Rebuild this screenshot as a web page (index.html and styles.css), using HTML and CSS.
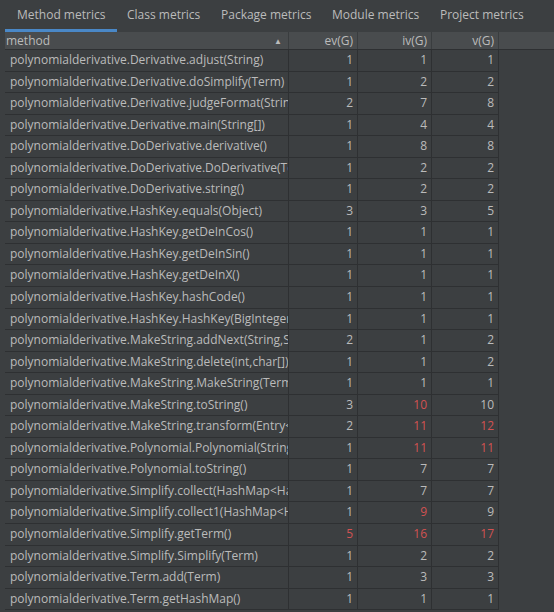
FILE: index.html
```html
<!DOCTYPE html>
<html>
<head>
<meta charset="utf-8">
<link rel="stylesheet" href="styles.css">
</head>
<body>
<div class="tabs">
  <div class="tab active">Method metrics</div>
  <div class="tab">Class metrics</div>
  <div class="tab">Package metrics</div>
  <div class="tab">Module metrics</div>
  <div class="tab">Project metrics</div>
</div>
<div class="table">
  <div class="row head">
    <div class="c m">method<span class="arrow">&#9650;</span></div>
    <div class="c n">ev(G)</div>
    <div class="c n">iv(G)</div>
    <div class="c n">v(G)</div>
  </div>
  <div class="row"><div class="c m">polynomialderivative.Derivative.adjust(String)</div><div class="c n">1</div><div class="c n">1</div><div class="c n">1</div></div>
  <div class="row"><div class="c m">polynomialderivative.Derivative.doSimplify(Term)</div><div class="c n">1</div><div class="c n">2</div><div class="c n">2</div></div>
  <div class="row"><div class="c m">polynomialderivative.Derivative.judgeFormat(Strin</div><div class="c n">2</div><div class="c n">7</div><div class="c n">8</div></div>
  <div class="row"><div class="c m">polynomialderivative.Derivative.main(String[])</div><div class="c n">1</div><div class="c n">4</div><div class="c n">4</div></div>
  <div class="row"><div class="c m">polynomialderivative.DoDerivative.derivative()</div><div class="c n">1</div><div class="c n">8</div><div class="c n">8</div></div>
  <div class="row"><div class="c m">polynomialderivative.DoDerivative.DoDerivative(Te</div><div class="c n">1</div><div class="c n">2</div><div class="c n">2</div></div>
  <div class="row"><div class="c m">polynomialderivative.DoDerivative.string()</div><div class="c n">1</div><div class="c n">2</div><div class="c n">2</div></div>
  <div class="row"><div class="c m">polynomialderivative.HashKey.equals(Object)</div><div class="c n">3</div><div class="c n">3</div><div class="c n">5</div></div>
  <div class="row"><div class="c m">polynomialderivative.HashKey.getDeInCos()</div><div class="c n">1</div><div class="c n">1</div><div class="c n">1</div></div>
  <div class="row"><div class="c m">polynomialderivative.HashKey.getDeInSin()</div><div class="c n">1</div><div class="c n">1</div><div class="c n">1</div></div>
  <div class="row"><div class="c m">polynomialderivative.HashKey.getDeInX()</div><div class="c n">1</div><div class="c n">1</div><div class="c n">1</div></div>
  <div class="row"><div class="c m">polynomialderivative.HashKey.hashCode()</div><div class="c n">1</div><div class="c n">1</div><div class="c n">1</div></div>
  <div class="row"><div class="c m">polynomialderivative.HashKey.HashKey(BigInteger</div><div class="c n">1</div><div class="c n">1</div><div class="c n">1</div></div>
  <div class="row"><div class="c m">polynomialderivative.MakeString.addNext(String,S</div><div class="c n">2</div><div class="c n">1</div><div class="c n">2</div></div>
  <div class="row"><div class="c m">polynomialderivative.MakeString.delete(int,char[])</div><div class="c n">1</div><div class="c n">1</div><div class="c n">2</div></div>
  <div class="row"><div class="c m">polynomialderivative.MakeString.MakeString(Term</div><div class="c n">1</div><div class="c n">1</div><div class="c n">1</div></div>
  <div class="row"><div class="c m">polynomialderivative.MakeString.toString()</div><div class="c n">3</div><div class="c n red">10</div><div class="c n">10</div></div>
  <div class="row"><div class="c m">polynomialderivative.MakeString.transform(Entry&lt;</div><div class="c n">2</div><div class="c n red">11</div><div class="c n red">12</div></div>
  <div class="row"><div class="c m">polynomialderivative.Polynomial.Polynomial(String</div><div class="c n">1</div><div class="c n red">11</div><div class="c n red">11</div></div>
  <div class="row"><div class="c m">polynomialderivative.Polynomial.toString()</div><div class="c n">1</div><div class="c n">7</div><div class="c n">7</div></div>
  <div class="row"><div class="c m">polynomialderivative.Simplify.collect(HashMap&lt;Ha</div><div class="c n">1</div><div class="c n">7</div><div class="c n">7</div></div>
  <div class="row"><div class="c m">polynomialderivative.Simplify.collect1(HashMap&lt;H</div><div class="c n">1</div><div class="c n red">9</div><div class="c n">9</div></div>
  <div class="row"><div class="c m">polynomialderivative.Simplify.getTerm()</div><div class="c n red">5</div><div class="c n red">16</div><div class="c n red">17</div></div>
  <div class="row"><div class="c m">polynomialderivative.Simplify.Simplify(Term)</div><div class="c n">1</div><div class="c n">2</div><div class="c n">2</div></div>
  <div class="row"><div class="c m">polynomialderivative.Term.add(Term)</div><div class="c n">1</div><div class="c n">3</div><div class="c n">3</div></div>
  <div class="row"><div class="c m">polynomialderivative.Term.getHashMap()</div><div class="c n">1</div><div class="c n">1</div><div class="c n">1</div></div>
</div>
</body>
</html>
```

FILE: styles.css
```css
html, body {
  margin: 0;
  padding: 0;
  background: #3c3f41;
  height: 612px;
  overflow: hidden;
}
body {
  font-family: "Open Sans", "Noto Sans", sans-serif;
  color: #bbbbbb;
}
.tabs {
  display: flex;
  height: 32px;
  padding-left: 5px;
  box-sizing: border-box;
}
.tab {
  font-size: 12px;
  line-height: 29px;
  height: 32px;
  box-sizing: border-box;
  color: #bbbbbb;
  white-space: nowrap;
  flex: none;
}
.tab:nth-child(1) { width: 112px; padding-left: 12px; }
.tab:nth-child(2) { width: 104px; padding-left: 10px; }
.tab:nth-child(3) { width: 111px; padding-left: 0; }
.tab:nth-child(4) { width: 108px; padding-left: 0; }
.tab:nth-child(5) { padding-left: 0; }
.tab.active {
  border-bottom: 3px solid #4a88c7;
}
.table {
  padding-left: 5px;
}
.row {
  display: grid;
  grid-template-columns: 284px 69px 74px 67px;
  height: 21.56px;
  box-sizing: border-box;
  border-bottom: 1px solid #2e3032;
  width: 494px;
}
.row.head {
  height: 18px;
  background: #494c4e;
  border-bottom: 1px solid #2e3032;
  width: 549px;
  grid-template-columns: 284px 69px 74px 67px 55px;
}
.c {
  font-size: 12px;
  line-height: 20px;
  white-space: nowrap;
  overflow: hidden;
  border-right: 1px solid #2e3032;
  box-sizing: border-box;
  min-width: 0;
}
.head .c {
  line-height: 17px;
  border-right: 1px solid #3a3d3f;
}
.m {
  padding-left: 5px;
  position: relative;
}
.head .m {
  padding-left: 1px;
}
.arrow {
  position: absolute;
  right: 6px;
  top: 0;
  font-size: 8px;
  line-height: 17px;
  color: #bbbbbb;
}
.n {
  text-align: right;
  padding-right: 4px;
  font-size: 12px;
}
.red {
  color: #d25252;
}
```
